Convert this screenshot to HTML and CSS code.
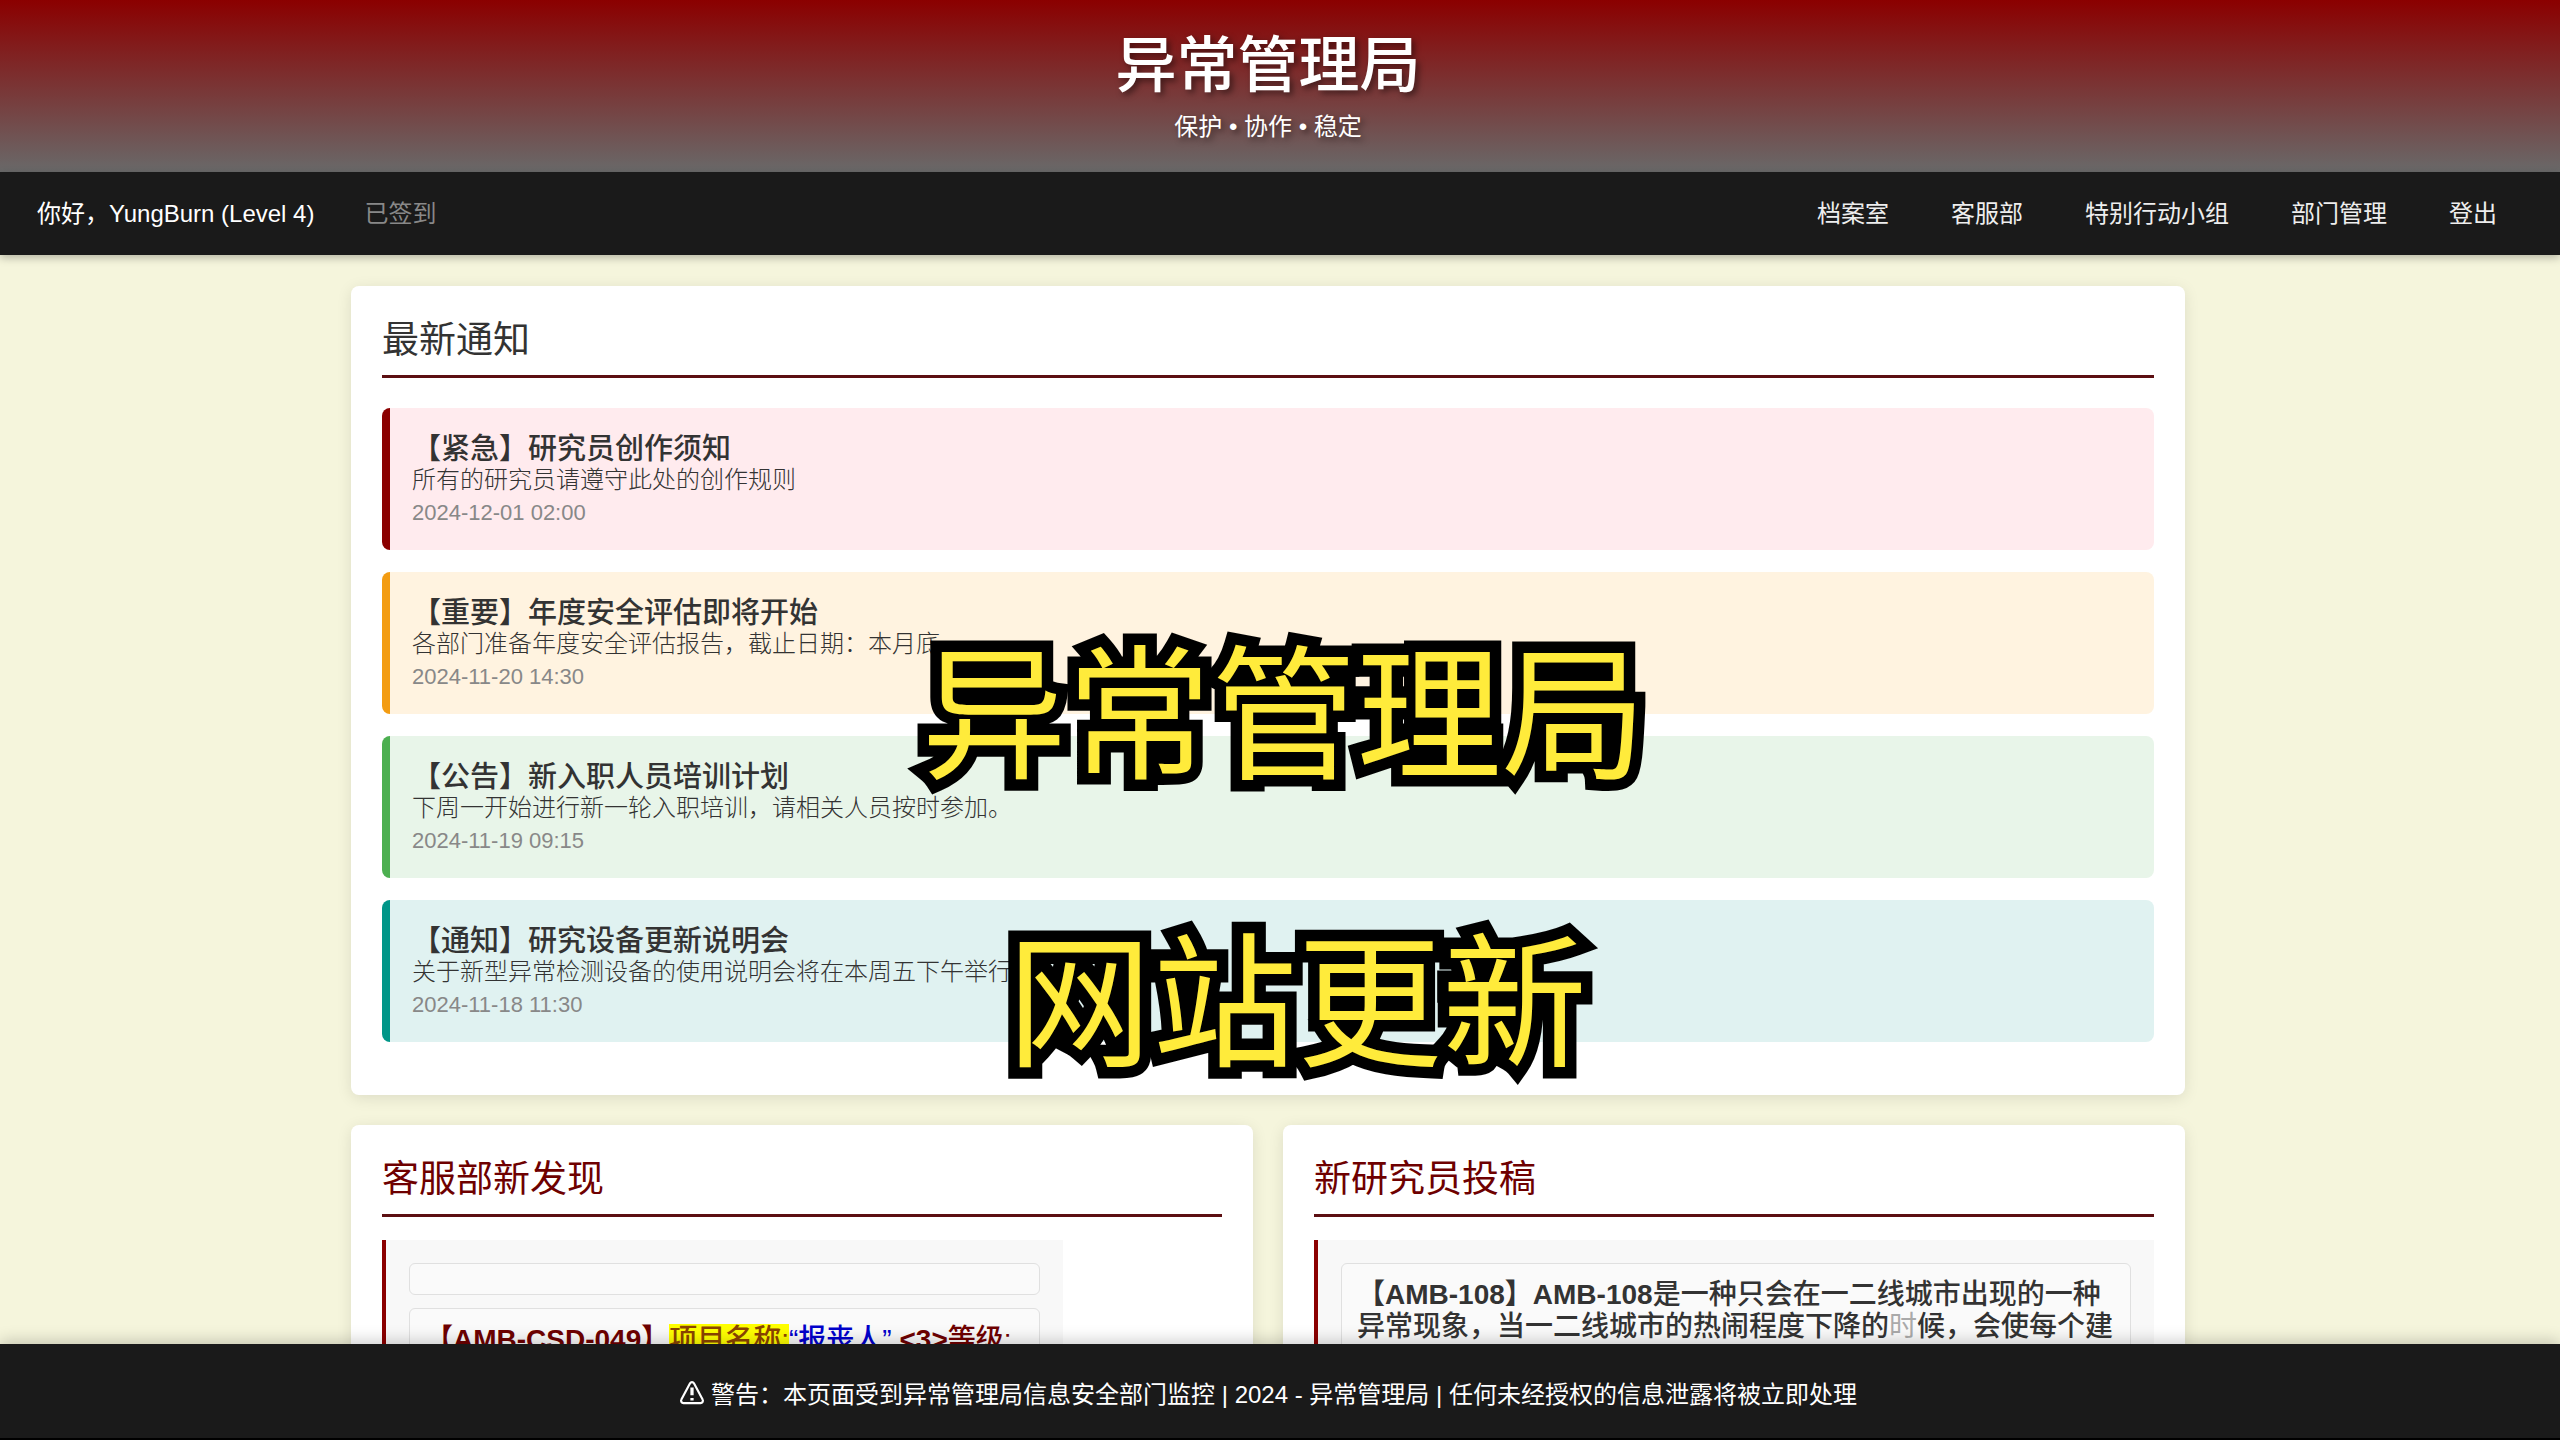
FILE: index.html
```html
<!DOCTYPE html>
<html lang="zh-CN">
<head>
<meta charset="utf-8">
<title>异常管理局</title>
<link rel="stylesheet" href="styles.css">
</head>
<body>
<header class="banner">
  <h1 class="banner-title">异常管理局</h1>
  <p class="banner-motto">保护 • 协作 • 稳定</p>
</header>
<nav class="nav">
  <div class="nav-user">
    <span>你好，YungBurn (Level 4)</span>
    <button class="nav-checkin" type="button" disabled>已签到</button>
  </div>
  <div class="nav-links">
    <a href="#archive">档案室</a>
    <a href="#service">客服部</a>
    <a href="#taskforce">特别行动小组</a>
    <a href="#departments">部门管理</a>
    <a href="#logout">登出</a>
  </div>
</nav>
<main class="main">
  <div class="content">
    <section class="card notices">
      <h2 class="card-title">最新通知</h2>
      <div class="notice-list">
        <article class="notice urgent">
          <h3>【紧急】研究员创作须知</h3>
          <p>所有的研究员请遵守此处的创作规则</p>
          <time datetime="2024-12-01T02:00">2024-12-01 02:00</time>
        </article>
        <article class="notice important">
          <h3>【重要】年度安全评估即将开始</h3>
          <p>各部门准备年度安全评估报告，截止日期：本月底</p>
          <time datetime="2024-11-20T14:30">2024-11-20 14:30</time>
        </article>
        <article class="notice bulletin">
          <h3>【公告】新入职人员培训计划</h3>
          <p>下周一开始进行新一轮入职培训，请相关人员按时参加。</p>
          <time datetime="2024-11-19T09:15">2024-11-19 09:15</time>
        </article>
        <article class="notice info">
          <h3>【通知】研究设备更新说明会</h3>
          <p>关于新型异常检测设备的使用说明会将在本周五下午举行</p>
          <time datetime="2024-11-18T11:30">2024-11-18 11:30</time>
        </article>
      </div>
    </section>
    <div class="columns">
      <section class="card">
        <h2 class="card-title red">客服部新发现</h2>
        <div class="feed fit">
          <div class="entry"></div>
          <div class="entry finding"><b>【AMB-CSD-049】</b><mark>项目名称:</mark><span class="name">“报丧人”</span> <b>&lt;3&gt;</b>等级:</div>
        </div>
      </section>
      <section class="card">
        <h2 class="card-title red">新研究员投稿</h2>
        <div class="feed">
          <div class="entry"><b>【AMB-108】AMB-108</b>是一种只会在一二线城市出现的一种<br>异常现象，当一二线城市的热闹程度下降的<span class="faded">时</span>候，会使每个建</div>
        </div>
      </section>
    </div>
  </div>
</main>
<footer class="footer">
  <svg class="warn" viewBox="0 0 24 24" aria-hidden="true"><path d="M10.200 3 2.200 18a2.200 2.200 0 0 0 1.900 3.300h15.800a2.200 2.200 0 0 0 1.900-3.300L13.800 3a2.100 2.100 0 0 0-3.600 0z"/><path class="mark" d="M12 7v7M12 16.500v2.500"/></svg>
  <span>警告：本页面受到异常管理局信息安全部门监控 | 2024 - 异常管理局 | 任何未经授权的信息泄露将被立即处理</span>
</footer>
<div class="caption">
  <div class="caption-top">异常管理局</div>
  <div class="caption-bottom">网站更新</div>
</div>
</body>
</html>
```
FILE: styles.css
```css
:root {
  --gutter: 24px;
  --dark: #1a1a1a;
}

* { box-sizing: border-box; margin: 0; padding: 0; }

body {
  display: flex;
  flex-direction: column;
  height: 100vh;
  overflow: hidden;
  position: relative;
  background: #f5f5dc;
  color: #333;
  font-family: "Liberation Sans", "Noto Sans CJK SC", sans-serif;
  font-size: 24px;
  font-weight: 300;
  line-height: 32px;
}

.banner {
  flex: none;
  padding: 26px var(--gutter) 24px 0;
  text-align: center;
  color: #fff;
  background: linear-gradient(#8b0000, #696969);
  text-shadow: 3px 3px 6px rgba(0, 0, 0, .5);
}
.banner-title { font-size: 61px; line-height: 80px; font-weight: 500; }
.banner-motto { line-height: 42px; font-weight: 400; }

.nav {
  flex: none;
  display: flex;
  justify-content: space-between;
  align-items: center;
  height: 83px;
  padding: 0 32px 0 37px;
  background: var(--dark);
  color: #fff;
  box-shadow: 0 3px 8px rgba(0, 0, 0, .25);
  z-index: 1;
}
.nav-user { display: flex; align-items: center; gap: 50px; font-weight: 400; }
.nav-checkin {
  border: 0;
  background: none;
  color: #888;
  font: inherit;
}
.nav-links { display: flex; font-weight: 400; }
.nav-links a { padding: 0 31px; color: #eee; text-decoration: none; }

.main { flex: 1; min-height: 0; overflow: hidden; padding: 31px var(--gutter) 0 0; }
.content {
  display: flex;
  flex-direction: column;
  gap: 30px;
  max-width: 1834px;
  margin: 0 auto;
}

.card {
  flex: 1;
  min-width: 0;
  padding: 31px;
  background: #fff;
  border-radius: 8px;
  box-shadow: 0 3px 15px rgba(0, 0, 0, .1);
}
.card-title {
  padding: 3px 0 13px;
  border-bottom: 3px solid #5c0f12;
  font-size: 37px;
  font-weight: 400;
  line-height: 42px;
}
.card-title.red { color: #6e0000; }

.notices { padding-bottom: 53px; }
.notice-list { display: flex; flex-direction: column; gap: 22px; margin-top: 30px; }
.notice {
  padding: 25px 22px 21px;
  border-left: 8px solid;
  border-radius: 8px;
}
.notice h3 { color: #333; font-size: 29px; font-weight: 500; line-height: 32px; }
.notice p { color: #333; line-height: 30px; }
.notice time { display: block; margin-top: 2px; color: #888; font-size: 22px; line-height: 32px; }
.urgent { background: #ffebee; border-color: #8b0000; }
.important { background: #fff3e0; border-color: #f39c12; }
.bulletin { background: #e8f5e9; border-color: #4caf50; }
.info { background: #e0f2f1; border-color: #009688; }

.columns { display: flex; gap: 30px; }
.feed {
  display: flex;
  flex-direction: column;
  gap: 13px;
  margin-top: 23px;
  padding: 23px;
  min-height: 200px;
  background: #f8f8f8;
  border-left: 4px solid #8b0000;
}
.feed.fit { width: 681px; }
.entry {
  padding: 15px;
  background: #fafafa;
  border: 1px solid #e0e0e0;
  border-radius: 6px;
  font-size: 28px;
  font-weight: 500;
  white-space: nowrap;
}
.entry b { font-weight: 700; }
.finding { color: #6e0000; min-height: 96px; }
.finding mark { background: #ff0; color: #8b4500; }
.finding .name { color: #00c; }
.faded { color: #aaa; font-weight: 400; }

.footer {
  flex: none;
  display: flex;
  justify-content: center;
  align-items: center;
  gap: 6px;
  height: 96px;
  padding: 8px var(--gutter) 0 0;
  background: var(--dark);
  border-bottom: 2px solid #000;
  color: #fff;
  font-weight: 400;
  box-shadow: 0 -3px 15px rgba(0, 0, 0, .2);
  z-index: 1;
}
.warn { width: 26px; height: 26px; margin-top: -4px; fill: none; stroke: #fff; stroke-width: 2; }
.warn .mark { stroke-width: 3; }

.caption {
  position: absolute;
  top: 574px;
  left: 0;
  right: 0;
  z-index: 2;
  color: #ffeb3b;
  font-size: 145px;
  font-weight: 400;
  line-height: 288px;
  text-align: center;
  -webkit-text-stroke: 23px #000;
  paint-order: stroke fill;
}
.caption-top { padding-left: 8px; }
.caption-bottom { padding-left: 34px; }
```
